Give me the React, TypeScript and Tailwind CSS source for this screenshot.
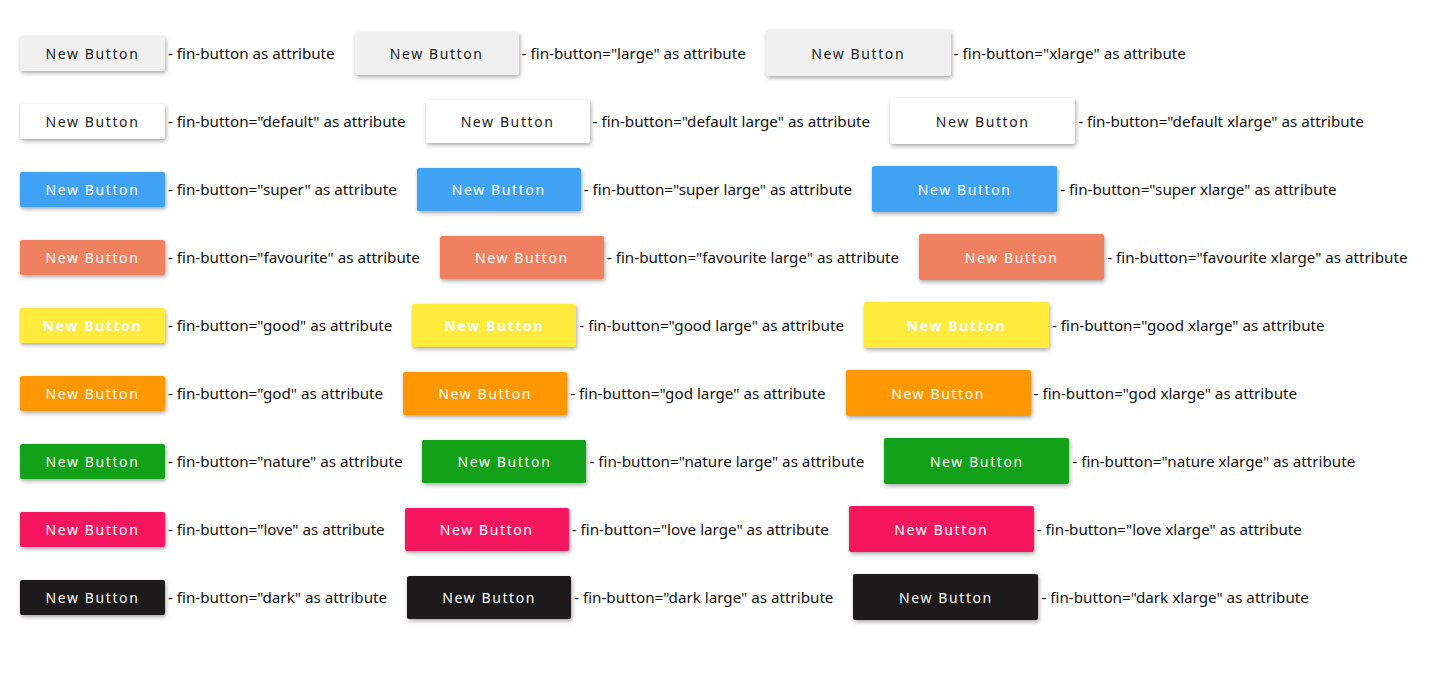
import React from "react";

type Variant = {
  name: string;
  bg: string;
  text: string;
};

const variants: Variant[] = [
  { name: "", bg: "bg-[#f0f0f0]", text: "text-[#1a1a1a]" },
  { name: "default", bg: "bg-white", text: "text-[#1a1a1a]" },
  { name: "super", bg: "bg-[#3fa2f5]", text: "text-white" },
  { name: "favourite", bg: "bg-[#f08160]", text: "text-white" },
  { name: "good", bg: "bg-[#ffeb3b]", text: "text-white font-bold" },
  { name: "god", bg: "bg-[#ff9800]", text: "text-white" },
  { name: "nature", bg: "bg-[#12a119]", text: "text-white" },
  { name: "love", bg: "bg-[#f5165f]", text: "text-white" },
  { name: "dark", bg: "bg-[#1c1a1b]", text: "text-white" },
];

// size -> box classes
const sizes = [
  { key: "", box: "w-[145px] h-[35px]" },
  { key: "large", box: "w-[164px] h-[43px]" },
  { key: "xlarge", box: "w-[185px] h-[46px]" },
];

const label = (variant: string, size: string) => {
  const value = [variant, size].filter(Boolean).join(" ");
  if (!value) return "- fin-button as attribute";
  return `- fin-button="${value}" as attribute`;
};

const FinButton: React.FC<{ v: Variant; box: string }> = ({ v, box }) => (
  <button
    type="button"
    className={`${box} ${v.bg} ${v.text} shrink-0 rounded-[2px] shadow-[1px_2px_4px_rgba(0,0,0,0.35)] text-[14px] tracking-[1.6px] flex items-center justify-center`}
  >
    New Button
  </button>
);

export default function App() {
  return (
    <div
      className="min-h-screen bg-white pt-[19px] pl-5 text-[15.2px] text-[#111]"
      style={{ fontFamily: '"Noto Sans", "Open Sans", sans-serif' }}
    >
      {variants.map((v) => (
        <div key={v.name || "base"} className="flex items-center h-[68px]">
          {sizes.map((s) => (
            <div key={s.key || "small"} className="flex items-center mr-5">
              <FinButton v={v} box={s.box} />
              <span className="ml-[3px] whitespace-nowrap">{label(v.name, s.key)}</span>
            </div>
          ))}
        </div>
      ))}
    </div>
  );
}
